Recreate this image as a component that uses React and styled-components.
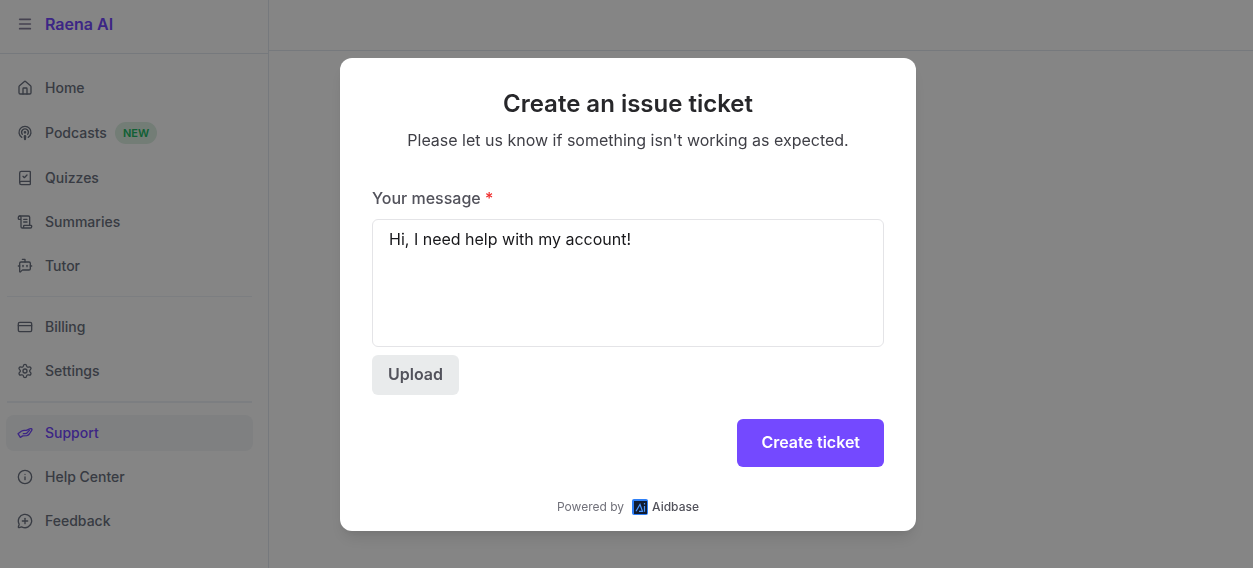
import React, { useState } from 'react';
import styled, { createGlobalStyle } from 'styled-components';
import {
  BookCheck,
  BotMessageSquare,
  CreditCard,
  House,
  Info,
  Menu,
  MessageCirclePlus,
  Podcast,
  ScrollText,
  Settings,
} from 'lucide-react';

const SupportIcon = () => (
  <svg
    width="16"
    height="16"
    viewBox="0 0 24 24"
    fill="none"
    stroke="currentColor"
    strokeWidth="2"
    strokeLinecap="round"
    strokeLinejoin="round"
    aria-hidden="true"
  >
    <path d="M1.500 13 6.500 9.300c1.500-1 3-1.300 4.500-1.300h3L19 5.800c1.500-.5 3.200-.3 3.500.7s-1 2.500-2 4l-2 3c-1.200 1.700-2.500 2.300-4 2.500l-6 .3L5 18.500z" />
    <path d="M9.500 13h3c1.500 0 2.500-.7 3.300-1.900L18.500 8" />
  </svg>
);

const AidbaseLogo = () => (
  <svg width="16" height="16" viewBox="0 0 16 16" aria-hidden="true">
    <rect width="16" height="16" rx="2" fill="#2f80f7" />
    <rect x="2" y="2" width="13" height="13" fill="#101c33" />
    <g fill="none" stroke="#4b96ff" strokeWidth="1.2">
      <path d="M4 12.300 8 5.500l2.500 6.800H7" />
      <path d="M12.500 7v5.800M12.500 4v1.500" />
    </g>
  </svg>
);

const groups = [
  [
    { label: 'Home', icon: House },
    { label: 'Podcasts', icon: Podcast, badge: 'NEW' },
    { label: 'Quizzes', icon: BookCheck },
    { label: 'Summaries', icon: ScrollText },
    { label: 'Tutor', icon: BotMessageSquare },
  ],
  [
    { label: 'Billing', icon: CreditCard },
    { label: 'Settings', icon: Settings },
  ],
  [
    { label: 'Support', icon: SupportIcon, active: true },
    { label: 'Help Center', icon: Info },
    { label: 'Feedback', icon: MessageCirclePlus },
  ],
];

const Sidebar = () => (
  <SidebarWrapper>
    <Brand>
      <MenuBtn type="button" aria-label="Toggle menu">
        <Menu size={16} strokeWidth={2.5} />
      </MenuBtn>
      <BrandName href="#">Raena AI</BrandName>
    </Brand>
    <Nav>
      {groups.map((items, index) => (
        <React.Fragment key={items[0].label}>
          {index > 0 && <Divider $thick={index === 2} />}
          <NavList>
            {items.map(({ label, icon: Icon, badge, active }) => (
              <li key={label}>
                <NavLink href="#" $active={active}>
                  <Icon size={16} />
                  <NavLabel>
                    {label}
                    {badge && <Badge>{badge}</Badge>}
                  </NavLabel>
                </NavLink>
              </li>
            ))}
          </NavList>
        </React.Fragment>
      ))}
    </Nav>
  </SidebarWrapper>
);

const TicketForm = () => {
  const [message, setMessage] = useState('Hi, I need help with my account!');

  const handleOnSubmit = (e) => {
    e.preventDefault();
  };

  return (
    <Modal role="dialog" aria-modal="true" aria-labelledby="ticket-title">
      <Title id="ticket-title">Create an issue ticket</Title>
      <Description>
        Please let us know if something isn't working as expected.
      </Description>
      <Form onSubmit={handleOnSubmit}>
        <Label htmlFor="message">
          Your message <Required>*</Required>
        </Label>
        <Message
          id="message"
          value={message}
          onChange={(e) => setMessage(e.target.value)}
        />
        <UploadBtn type="button">Upload</UploadBtn>
        <SubmitBtn type="submit">Create ticket</SubmitBtn>
      </Form>
      <PoweredBy>
        Powered by
        <VendorLink href="#">
          <AidbaseLogo />
          Aidbase
        </VendorLink>
      </PoweredBy>
    </Modal>
  );
};

const App = () => (
  <>
    <GlobalStyle />
    <Page>
      <Sidebar />
      <Main>
        <TopBar />
      </Main>
    </Page>
    <Overlay>
      <TicketForm />
    </Overlay>
  </>
);

const GlobalStyle = createGlobalStyle`
  *,
  *::before,
  *::after {
    box-sizing: border-box;
  }

  body {
    margin: 0;
    overflow: hidden;
    font-family: Inter, "Liberation Sans", sans-serif;
    background-color: #fff;
  }

  button,
  textarea {
    font-family: inherit;
  }
`;

const Page = styled.div`
  display: flex;
  min-height: 100vh;
`;

const SidebarWrapper = styled.aside`
  flex: 0 0 269px;
  border-right: 1px solid #e2e8f0;
`;

const Brand = styled.div`
  display: flex;
  align-items: center;
  gap: 12px;
  height: 54px;
  padding: 0 17px 6px;
  border-bottom: 1px solid #e2e8f0;
`;

const MenuBtn = styled.button`
  display: flex;
  padding: 0;
  color: #857f9a;
  border: none;
  background: none;
  cursor: pointer;
`;

const BrandName = styled.a`
  font-size: 16px;
  font-weight: 600;
  line-height: 24px;
  color: #7449ff;
  text-decoration: none;
`;

const Nav = styled.nav`
  padding: 16px 15px 16px 6px;
`;

const NavList = styled.ul`
  display: flex;
  flex-direction: column;
  gap: 8px;
  margin: 0;
  padding: 0;
  list-style: none;
`;

const NavLink = styled.a`
  display: flex;
  align-items: center;
  gap: 12px;
  padding: 8px 11px;
  font-size: 14px;
  font-weight: 500;
  line-height: 20px;
  color: ${({ $active }) => ($active ? '#7449ff' : '#6b7280')};
  border-radius: 8px;
  background-color: ${({ $active }) => ($active ? '#f3f5f7' : 'transparent')};
  text-decoration: none;
`;

const NavLabel = styled.span`
  display: flex;
  align-items: center;
  gap: 8px;
`;

const Badge = styled.span`
  padding: 0 8px;
  font-size: 11px;
  font-weight: 600;
  line-height: 22px;
  color: #22b865;
  border-radius: 11px;
  background-color: #dcefe2;
`;

const Divider = styled.hr`
  margin: 12px 1px;
  border: none;
  border-top: ${({ $thick }) => ($thick ? '2px' : '1px')} solid #edf2f7;
`;

const Main = styled.main`
  flex: 1;
`;

const TopBar = styled.header`
  height: 51px;
  border-bottom: 1px solid #e2e8f0;
`;

const Overlay = styled.div`
  position: fixed;
  inset: 0;
  display: flex;
  justify-content: center;
  align-items: flex-start;
  padding: 58px 0 32px 3px;
  overflow: auto;
  background-color: rgba(0, 0, 0, 0.48);
`;

const Modal = styled.section`
  width: 100%;
  max-width: 576px;
  padding: 32px 32px 16px;
  border-radius: 12px;
  background-color: #fff;
  box-shadow: 0 10px 15px -3px rgba(0, 0, 0, 0.1),
    0 4px 6px -2px rgba(0, 0, 0, 0.05);
`;

const Title = styled.h1`
  margin: 0 0 10px;
  font-size: 24px;
  font-weight: 600;
  line-height: 28px;
  text-align: center;
  color: #27272a;
`;

const Description = styled.p`
  margin: 0 0 34px;
  font-size: 16px;
  line-height: 24px;
  text-align: center;
  color: #3f3f46;
`;

const Form = styled.form`
  display: flex;
  flex-direction: column;
  align-items: flex-start;
`;

const Label = styled.label`
  margin-bottom: 9px;
  font-size: 16px;
  font-weight: 500;
  line-height: 24px;
  color: #52525b;
`;

const Required = styled.span`
  color: #ef2b2b;
`;

const Message = styled.textarea`
  display: block;
  margin-bottom: 8px;
  padding: 7px 16px;
  width: 100%;
  height: 128px;
  font-size: 16px;
  line-height: 24px;
  color: #18181b;
  border: 1px solid #e4e4e7;
  border-radius: 6px;
  outline: none;
  resize: none;
`;

const Button = styled.button`
  padding: 0 16px 2px;
  height: 40px;
  font-size: 16px;
  font-weight: 600;
  border: none;
  border-radius: 6px;
  cursor: pointer;
`;

const UploadBtn = styled(Button)`
  color: #52525b;
  background-color: #e9ebec;
`;

const SubmitBtn = styled(Button)`
  align-self: flex-end;
  margin-top: 24px;
  padding: 0 24px 2px;
  height: 48px;
  color: #fff;
  background-color: #7449ff;
`;

const PoweredBy = styled.footer`
  display: flex;
  justify-content: center;
  align-items: center;
  gap: 8px;
  margin-top: 32px;
  font-size: 12px;
  line-height: 16px;
  color: #71717a;
`;

const VendorLink = styled.a`
  display: flex;
  align-items: center;
  gap: 4px;
  font-weight: 500;
  color: #52525b;
  text-decoration: none;
`;

export default App;
